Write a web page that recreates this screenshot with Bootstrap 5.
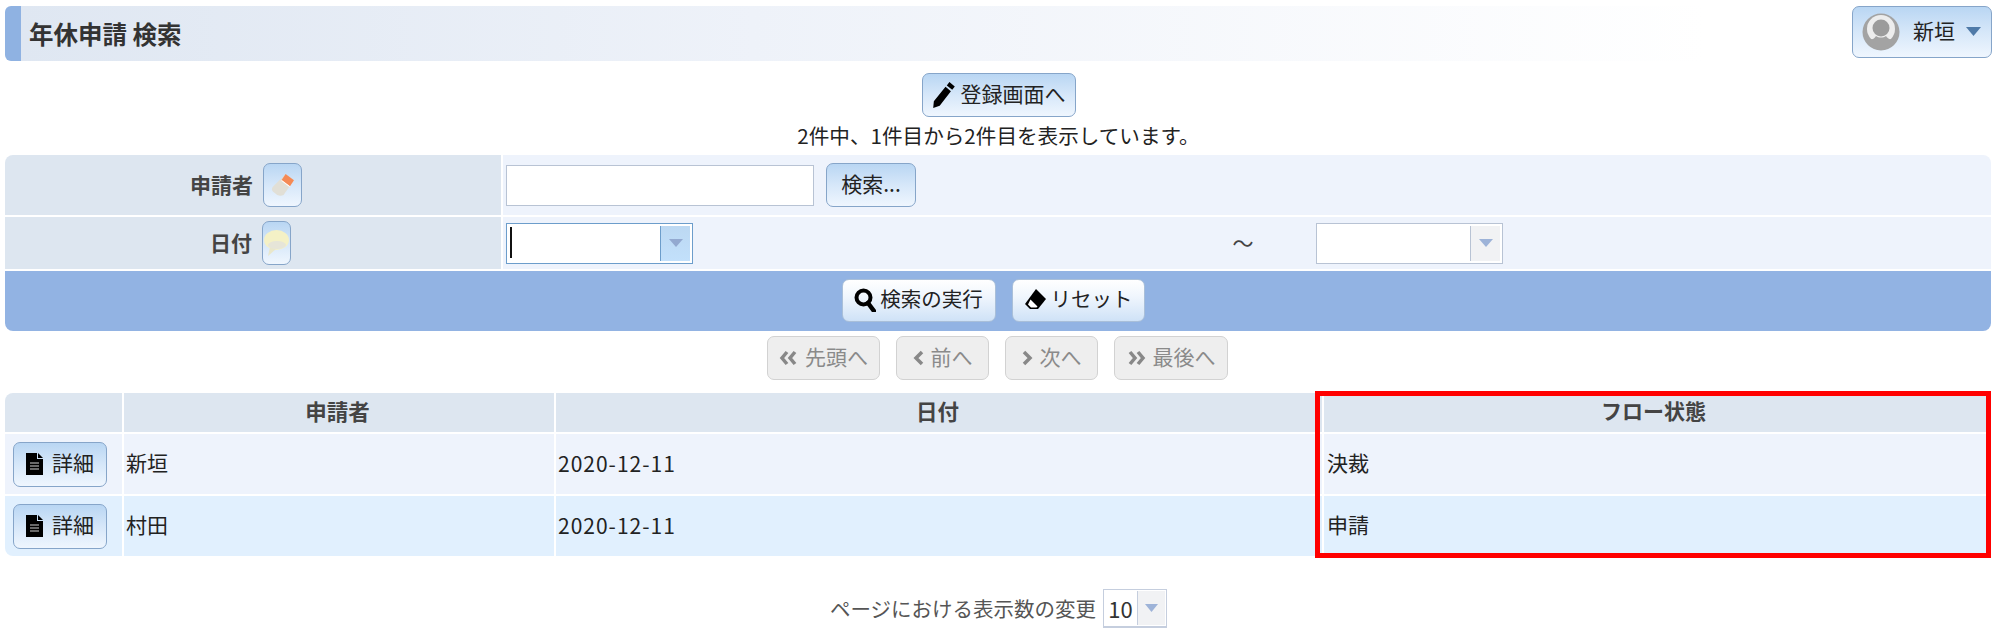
<!DOCTYPE html>
<html lang="ja">
<head>
<meta charset="utf-8">
<title>年休申請 検索</title>
<link href="https://cdn.jsdelivr.net/npm/bootstrap@5.3.0/dist/css/bootstrap.min.css" rel="stylesheet">
<style>
html,body{height:641px;overflow:hidden;background:#fff;}
body{font-family:"Noto Sans CJK JP","Liberation Sans",sans-serif;font-size:21px;color:#222;line-height:1.2;}
.pg{padding:6px 8px 0 5px;}
.title-bar{height:55px;border-left:16px solid #8fb2e2;border-radius:6px 0 0 6px;background:linear-gradient(90deg,#dfe7f2 0%,#eef2f9 40%,#fff 92%);padding-left:8px;font-size:24.500px;font-weight:700;color:#333;}
.gbtn{display:inline-flex;align-items:center;justify-content:center;gap:5px;height:44px;padding:0 0 3px;font-size:20.500px;line-height:1;color:#222;border:1.5px solid #86a5c9;border-radius:7px;background:linear-gradient(180deg,#b9d6f3 0%,#d6e7f9 50%,#eff6fe 100%);white-space:nowrap;}
.gbtn svg{position:relative;top:1px;}
.gbtn:hover{color:#222;background:linear-gradient(180deg,#b9d6f3 0%,#d6e7f9 50%,#eff6fe 100%);border-color:#86a5c9;}
.user-btn{width:140px;height:52px;justify-content:flex-start;padding-left:9px;gap:0;font-size:21px;}
.user-btn .uname{margin-left:13px;}
.user-btn .ucaret{margin-left:11px;}
.reg-btn{width:154px;margin-top:12px;font-size:21px;}
.info-line{height:38px;padding-bottom:1px;font-size:20.600px;}
.tbl-q,.tbl-r{border-collapse:separate;border-spacing:0;table-layout:fixed;width:1986px;border-radius:8px;overflow:hidden;margin:0;}
.table.tbl-q>tbody>tr>td,.table.tbl-r>tbody>tr>td,.table.tbl-r>thead>tr>th{padding:0;box-shadow:none;vertical-align:middle;border-bottom:2px solid #fff;border-right:2px solid #fff;color:#222;}
.table.tbl-q>tbody>tr>td.lab{background:#dde6f0;text-align:right;font-weight:700;color:#444;padding-right:199px;}
.table.tbl-q>tbody>tr>td.val{background:#eef3fc;padding-left:3px;border-right:0;}
.table.tbl-q>tbody>tr.r1>td{height:62px;}
.table.tbl-q>tbody>tr.r2>td{height:54px;}
.table.tbl-q>tbody>tr.r3>td{height:60px;background:#92b3e3;border:0;padding-bottom:2px;}
.lab-in{display:flex;align-items:center;justify-content:flex-end;}
.ibtn1{width:39px;height:44px;margin-left:10px;}
.ibtn2{width:29px;height:44px;margin-left:10px;margin-right:11px;}
.txt-in{width:308px;height:41px;background:#fff;border:1.5px solid #b8c3d4;}
.srch-btn{width:90px;margin-left:12px;font-size:21px;}
.combo{display:flex;height:41px;width:187px;background:#fff;border:1.5px solid #b8c3d4;}
.combo-f{border-color:#6c9dcb;}
.combo-f .combo-body{position:relative;}
.combo-f .combo-body::before{content:"";position:absolute;left:3px;top:3px;height:31px;width:2px;background:#111;}
.combo-body{flex:1;}
.combo-arr{width:30px;margin:2px;margin-left:0;border-left:1.5px solid #b8c3d4;background:#f1f2f4;display:flex;align-items:center;justify-content:center;}
.combo-f .combo-arr{background:linear-gradient(180deg,#bcd8f2,#c2e0fb);border-left-color:#6c9dcb;}
.wave{margin-left:538px;width:24px;margin-right:61px;text-align:center;color:#444;}
.act-btn1{width:154px;height:43px;gap:4px;}
.act-btn2{width:133px;height:43px;gap:4px;}
.act-btn1,.act-btn2{background:linear-gradient(180deg,#fff 0%,#f0f6fd 40%,#cfe2f7 100%);border-color:#a9bfd9;border-width:1px;}
.act-btn1:hover,.act-btn2:hover{background:linear-gradient(180deg,#fff 0%,#f0f6fd 40%,#cfe2f7 100%);}
.acts{padding-right:10px;}
.pager{padding-top:5px;margin-bottom:13px;gap:16px;padding-right:2px;}
.pbtn,.pbtn:disabled{display:inline-flex;align-items:center;justify-content:center;gap:7px;height:44px;padding:0 0 3px;font-size:21px;line-height:1;color:#8a8a8a;background:#eee;border:1.5px solid #d2d2d2;border-radius:7px;opacity:1;}
.pbtn svg{position:relative;top:1px;}
.pb1{width:113px}.pb2{width:93px}.pb3{width:93px}.pb4{width:114px}
.table.tbl-r>thead>tr>th{background:#dde6f0;height:41px;text-align:center;font-weight:700;color:#444;padding-bottom:3px;padding-right:3px;font-size:21.500px;}
.table.tbl-r>thead>tr>th:last-child{padding-right:8px;font-size:21px;}
.table.tbl-r>tbody>tr>td{padding-left:2px;padding-bottom:2px;height:62px;}
.table.tbl-r>tbody>tr.a>td{background:#eef3fc;}
.table.tbl-r>tbody>tr.b>td{background:#e1f0fe;border-bottom:0;height:60px;}
.table.tbl-r>tbody>tr>td.btn-c{padding-left:8px;padding-bottom:0;}
.table.tbl-r>tbody>tr>td:last-child{padding-left:3px;}
.table.tbl-r th:last-child,.table.tbl-r td:last-child{border-right:0;}
.det-btn{width:94px;height:45px;gap:9px;font-size:21px;}
.table.tbl-r>tbody>tr>td.datec{letter-spacing:1px;padding-bottom:0;}
.wrap-r{position:relative;}
.red-box{position:absolute;left:1310px;top:-2px;width:676px;height:167px;border:5px solid #f00;pointer-events:none;}
.foot{margin-top:33px;color:#555;font-size:20.500px;}
.psize{display:flex;width:64px;height:39px;margin-left:7px;background:#fff;border:1.5px solid #c5cede;border-bottom-width:2px;color:#333;}
.psize .n{flex:1;text-align:center;line-height:37px;font-size:22px;}
.psize .combo-arr{margin:1px;margin-left:0;width:28px;border-left-color:#c5cede;}
svg{flex:none;display:block;}
</style>
</head>
<body>
<div class="pg">
  <div class="d-flex align-items-start">
    <div class="title-bar flex-grow-1 d-flex align-items-center">年休申請 検索</div>
    <button type="button" class="btn gbtn user-btn">
      <svg width="38" height="38" viewBox="0 0 38 38"><circle cx="19" cy="19" r="18.5" fill="#a3a3a3"/><circle cx="19" cy="16" r="14" fill="#ededed"/><circle cx="19" cy="15" r="8.5" fill="#9b9b9b"/><path d="M5 24c5 4 7 2 9-1 3 2 7 2 10 0 2 3 5 5 9 1-1 8-7 13-14 13S6 32 5 24z" fill="#a3a3a3"/></svg>
      <span class="uname">新垣</span>
      <svg class="ucaret" width="15" height="9" viewBox="0 0 15 9"><path d="M0 0h15L7.5 9z" fill="#4f7aa8"/></svg>
    </button>
  </div>

  <div class="text-center">
    <button type="button" class="btn gbtn reg-btn">
      <svg width="24" height="27" viewBox="0 0 22 25"><path d="M16 1l5 4-2.4 3.2-5-4zM12.4 5.4l5 4L7 23 1 25l.6-6.300z" fill="#000"/></svg>
      <span>登録画面へ</span>
    </button>
    <div class="info-line d-flex align-items-center justify-content-center">2件中、1件目から2件目を表示しています。</div>
  </div>

  <table class="table table-borderless tbl-q">
    <colgroup><col style="width:498px"><col></colgroup>
    <tbody>
      <tr class="r1">
        <td class="lab"><div class="lab-in"><span>申請者</span>
          <button type="button" class="btn gbtn ibtn1" aria-label="クリア">
            <svg width="25" height="25" viewBox="0 0 24 24"><path d="M15 2l8 6-10 14c-2 1-4 1-6 0l-4-3c-2-2-1-4 0-5z" fill="#e1dfd6"/><path d="M15 2l8 6-4 6-8-6z" fill="#f58a55"/><path d="M11 8l8 6" stroke="#fff" stroke-width="1"/></svg>
          </button></div></td>
        <td class="val"><div class="d-flex align-items-center"><div class="txt-in"></div><button type="button" class="btn gbtn srch-btn">検索...</button></div></td>
      </tr>
      <tr class="r2">
        <td class="lab"><div class="lab-in"><span>日付</span>
          <button type="button" class="btn gbtn ibtn2" aria-label="ヘルプ">
            <svg width="27" height="30" viewBox="0 0 27 30"><ellipse cx="13.500" cy="12" rx="12.500" ry="10" fill="#f4f1c6"/><path d="M7 19l-2 9 8-7z" fill="#e9e7cb"/><ellipse cx="14" cy="17" rx="9" ry="4" fill="#e6e5d8"/></svg>
          </button></div></td>
        <td class="val"><div class="d-flex align-items-center">
          <div class="combo combo-f"><div class="combo-body"></div><div class="combo-arr"><svg width="14" height="8" viewBox="0 0 14 8"><path d="M0 0h14L7 8z" fill="#93a9d0"/></svg></div></div>
          <div class="wave">～</div>
          <div class="combo"><div class="combo-body"></div><div class="combo-arr"><svg width="14" height="8" viewBox="0 0 14 8"><path d="M0 0h14L7 8z" fill="#9db3d8"/></svg></div></div>
        </div></td>
      </tr>
      <tr class="r3">
        <td colspan="2"><div class="d-flex justify-content-center gap-3 acts">
          <button type="button" class="btn gbtn act-btn1">
            <svg width="22" height="24" viewBox="0 0 22 24"><circle cx="9.500" cy="9.500" r="7" fill="none" stroke="#000" stroke-width="4"/><path d="M14 15l6 8" stroke="#000" stroke-width="4.500" stroke-linecap="round"/></svg>
            <span>検索の実行</span>
          </button>
          <button type="button" class="btn gbtn act-btn2">
            <svg width="23" height="22" viewBox="0 0 23 22"><path d="M12 0l10 10-8 10H6L1 15z" fill="#000"/><path d="M6.500 10.500l7 7-1 1H7l-3-3z" fill="#fff"/></svg>
            <span>リセット</span>
          </button>
        </div></td>
      </tr>
    </tbody>
  </table>

  <div class="d-flex justify-content-center pager">
    <button type="button" class="pbtn pb1" disabled><svg width="19" height="16" viewBox="0 0 19 16"><path d="M8 2L3 8l5 6M16 2l-5 6 5 6" fill="none" stroke="#888" stroke-width="3.500"/></svg><span>先頭へ</span></button>
    <button type="button" class="pbtn pb2" disabled><svg width="11" height="16" viewBox="0 0 11 16"><path d="M9 2L3 8l6 6" fill="none" stroke="#888" stroke-width="3.500"/></svg><span>前へ</span></button>
    <button type="button" class="pbtn pb3" disabled><svg width="11" height="16" viewBox="0 0 11 16"><path d="M2 2l6 6-6 6" fill="none" stroke="#888" stroke-width="3.500"/></svg><span>次へ</span></button>
    <button type="button" class="pbtn pb4" disabled><svg width="19" height="16" viewBox="0 0 19 16"><path d="M3 2l5 6-5 6M11 2l5 6-5 6" fill="none" stroke="#888" stroke-width="3.500"/></svg><span>最後へ</span></button>
  </div>

  <div class="wrap-r">
    <table class="table table-borderless tbl-r">
      <colgroup><col style="width:119px"><col style="width:432px"><col style="width:768px"><col></colgroup>
      <thead><tr><th></th><th>申請者</th><th>日付</th><th>フロー状態</th></tr></thead>
      <tbody>
        <tr class="a">
          <td class="btn-c"><button type="button" class="btn gbtn det-btn"><svg width="17" height="22" viewBox="0 0 17 22"><path d="M0 0h11v6h6v16H0z" fill="#000"/><path d="M12 0l5 5h-5z" fill="#000"/><path d="M4 10h9M4 13h9M4 16h9" stroke="#8a8a8a" stroke-width="1.500"/></svg><span>詳細</span></button></td>
          <td>新垣</td><td class="datec">2020-12-11</td><td>決裁</td>
        </tr>
        <tr class="b">
          <td class="btn-c"><button type="button" class="btn gbtn det-btn"><svg width="17" height="22" viewBox="0 0 17 22"><path d="M0 0h11v6h6v16H0z" fill="#000"/><path d="M12 0l5 5h-5z" fill="#000"/><path d="M4 10h9M4 13h9M4 16h9" stroke="#8a8a8a" stroke-width="1.500"/></svg><span>詳細</span></button></td>
          <td>村田</td><td class="datec">2020-12-11</td><td>申請</td>
        </tr>
      </tbody>
    </table>
    <div class="red-box"></div>
  </div>

  <div class="d-flex justify-content-center align-items-center foot">
    <span>ページにおける表示数の変更</span>
    <div class="psize"><div class="n">10</div><div class="combo-arr"><svg width="13" height="8" viewBox="0 0 13 8"><path d="M0 0h13L6.500 8z" fill="#9db3d8"/></svg></div></div>
  </div>
</div>
<script src="https://cdn.jsdelivr.net/npm/bootstrap@5.3.0/dist/js/bootstrap.bundle.min.js"></script>
</body>
</html>
